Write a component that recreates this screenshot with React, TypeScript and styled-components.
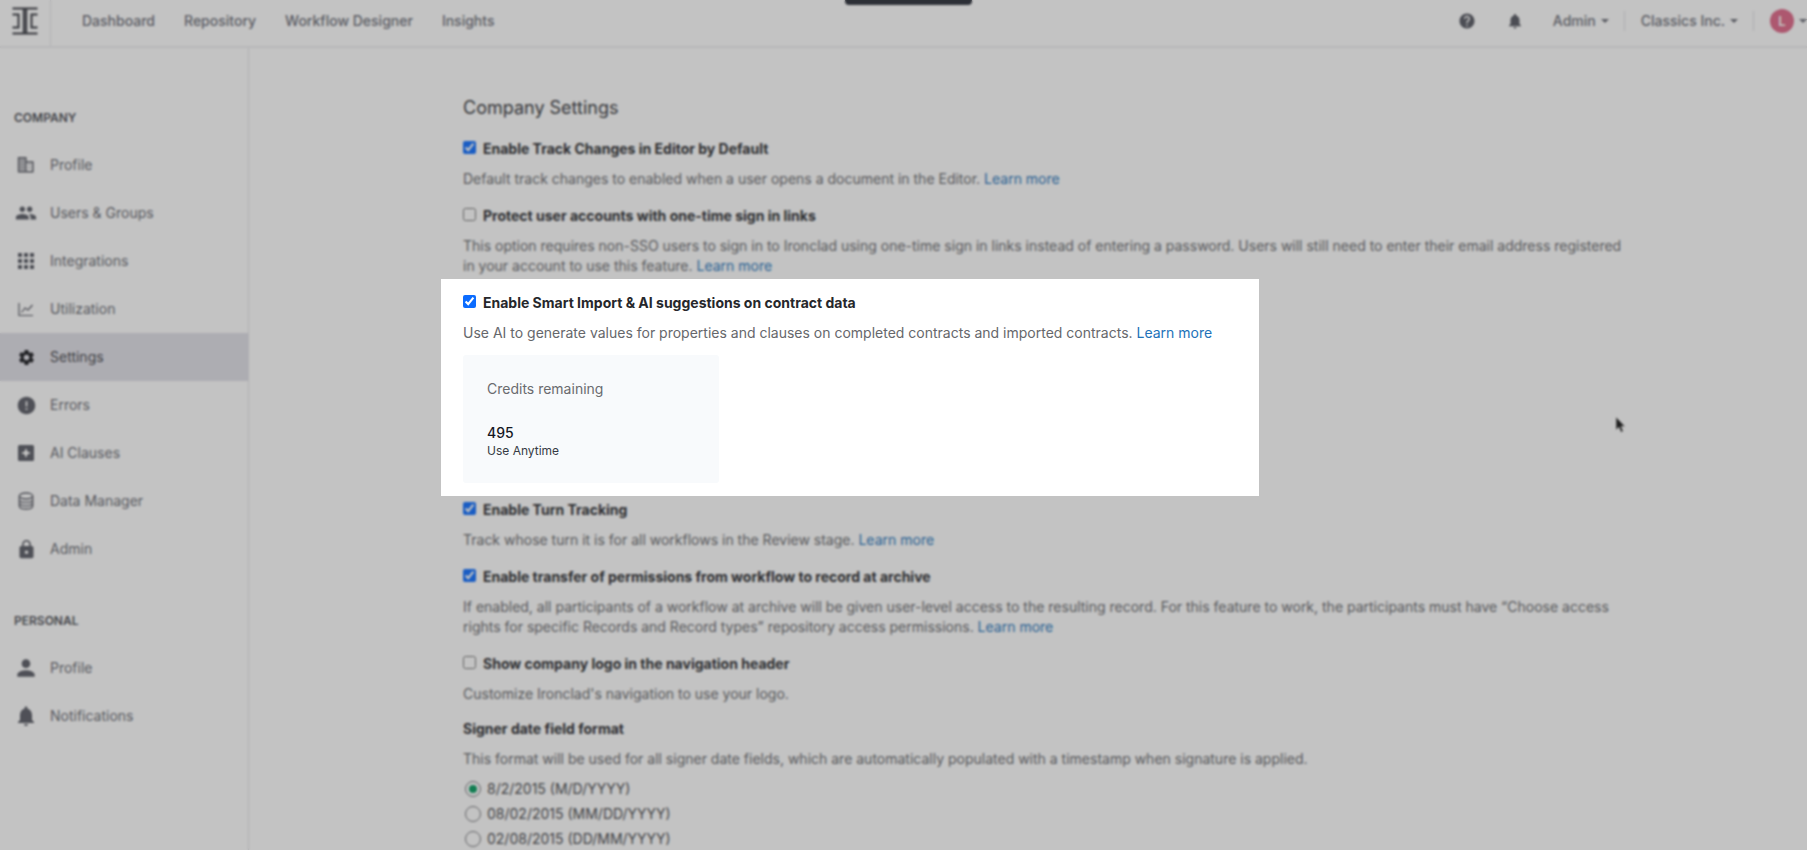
import React, { useState } from "react";
import styled, { createGlobalStyle } from "styled-components";
import {
  MdPeople, MdApps, MdSettings, MdError, MdLock, MdPerson, MdNotifications, MdHelp,
} from "react-icons/md";

const GlobalStyle = createGlobalStyle`
  *, *::before, *::after { box-sizing: border-box; }
  html, body { margin: 0; overflow: hidden; }
  body {
    background: #fff;
    color: #3c3d42;
    font-family: Inter, "Liberation Sans", sans-serif;
    font-size: 14px;
    line-height: 20px;
  }
`;

const Page = styled.div`
  min-height: 100vh;
  display: flex;
  flex-direction: column;
`;

const Header = styled.header`
  display: flex;
  align-items: stretch;
  height: 48px;
  border-bottom: 2px solid #eeeef0;
  color: #6a6c76;
  font-weight: 500;
`;

const LogoLink = styled.a`
  display: flex;
  justify-content: center;
  width: 51px;
  padding-top: 6px;
  border-right: 1px solid #e6e6ea;
  color: #34363e;
`;

const MainNav = styled.nav`
  display: flex;
  align-items: center;
  gap: 29px;
  padding: 0 31px 4px;
  a { color: inherit; text-decoration: none; }
`;

const Tools = styled.div`
  display: flex;
  align-items: center;
  margin-left: auto;
  padding-bottom: 4px;
`;

const ToolButton = styled.button`
  display: flex;
  align-items: center;
  gap: 5px;
  padding: 0;
  border: 0;
  background: none;
  color: #6a6c76;
  font: inherit;
`;

const IconTools = styled.div`
  display: flex;
  gap: 30px;
  margin-right: 29px;
  button { color: #53555f; }
`;

const Divider = styled.span`
  width: 1px;
  height: 20px;
  margin: 0 16px 0 15px;
  background: #e0e0e4;
`;

const Caret = styled.span`
  border: 4px solid transparent;
  border-top-color: currentColor;
  border-bottom-width: 0;
`;

const Avatar = styled.span`
  display: grid;
  place-items: center;
  width: 24px;
  height: 24px;
  border-radius: 50%;
  background: #df6486;
  color: #fff;
  font-size: 13px;
  font-weight: 600;
`;

const Body = styled.div`
  display: flex;
  flex: 1;
`;

const Sidebar = styled.aside`
  flex: none;
  width: 249px;
  padding-top: 60px;
  border-right: 1px solid #e3e3e8;
`;

const NavGroup = styled.nav`
  margin-bottom: 38px;
`;

const NavTitle = styled.h2`
  margin: 0 0 13px;
  padding-left: 14px;
  color: #4a4b52;
  font-size: 12px;
  font-weight: 600;
  line-height: 20px;
`;

const NavItem = styled.a<{ $active?: boolean }>`
  display: flex;
  align-items: center;
  gap: 14px;
  height: 48px;
  padding-left: 16px;
  background: ${({ $active }) => ($active ? "#e0dfe7" : "none")};
  color: ${({ $active }) => ($active ? "#3e3f46" : "#66686f")};
  text-decoration: none;
`;

const IconSlot = styled.span<{ $active?: boolean }>`
  display: flex;
  align-items: center;
  justify-content: center;
  flex: none;
  width: 20px;
  color: ${({ $active }) => ($active ? "#17181d" : "#575963")};
  svg { flex: none; }
`;

const Main = styled.main`
  flex: 1;
  min-width: 0;
  padding: 48px 180px 0 214px;
  @media (max-width: 1400px) {
    padding: 48px 48px 0;
  }
`;

const Content = styled.form`
  display: flex;
  flex-direction: column;
  gap: 17px;
`;

const PageTitle = styled.h1`
  margin: 0 0 2px;
  color: #333438;
  font-size: 18px;
  font-weight: 400;
  line-height: 24px;
`;

const SettingBlock = styled.section``;

const Spotlight = styled.section`
  position: relative;
  z-index: 2;
  width: 818px;
  max-width: calc(100% + 44px);
  margin: -14px -22px -13px;
  padding: 14px 22px 13px;
  background: #fff;
`;

const SettingLabel = styled.label`
  display: flex;
  align-items: flex-start;
  gap: 7px;
  color: #26272b;
  font-weight: 700;
`;

const Checkbox = styled.input`
  width: 13px;
  height: 13px;
  margin: 2px 0 0;
  accent-color: #0b6cff;
`;

const Description = styled.p`
  margin: 10px 0 0;
  color: #66676b;
`;

const LearnMore = styled.a`
  color: #2272b9;
  text-decoration: none;
`;

const CreditsCard = styled.div`
  width: 256px;
  height: 128px;
  margin-top: 12px;
  padding: 24px;
  border-radius: 3px;
  background: #f8fafc;
  color: #6a6b6f;
`;

const CreditCount = styled.div`
  margin-top: 24px;
  color: #15171f;
  font-weight: 500;
`;

const CreditKind = styled.div`
  color: #363a44;
  font-size: 12px;
  line-height: 16px;
`;

const DateFormats = styled.fieldset`
  margin: -2px 0 0;
  padding: 0;
  border: 0;
`;

const Legend = styled.legend`
  padding: 0;
  color: #26272b;
  font-weight: 700;
`;

const RadioList = styled.div`
  display: flex;
  flex-direction: column;
  gap: 5px;
  margin-top: 10px;
`;

const RadioLabel = styled.label`
  display: flex;
  align-items: center;
  gap: 6px;
  color: #46474b;
`;

const Radio = styled.input`
  appearance: none;
  display: grid;
  place-items: center;
  width: 16px;
  height: 16px;
  margin: 0 0 0 2px;
  border: 1px solid #77787c;
  border-radius: 50%;
  &:checked::before {
    content: "";
    width: 8px;
    height: 8px;
    border-radius: 50%;
    background: #009a5c;
  }
`;

const Toast = styled.div`
  position: fixed;
  top: 0;
  left: 50%;
  width: 127px;
  height: 5px;
  margin-left: -59px;
  border-radius: 0 0 4px 4px;
  background: #262a35;
`;

const Pointer = styled.svg`
  position: fixed;
  top: 416px;
  left: 1615px;
`;

const Scrim = styled.div`
  position: fixed;
  inset: 0;
  z-index: 1;
  background: rgba(60, 60, 60, 0.308);
  backdrop-filter: blur(1px);
  pointer-events: none;
`;

const Logo = () => (
  <svg width="26" height="30" viewBox="0 0 26 30" fill="none" stroke="currentColor" strokeWidth="2">
    <path d="M.5 2.500h25M.5 27.500h25M11.800 3v24M14.200 3v24" />
    <path d="M.5 8.500h6v13h-6M25.500 8.500h-6v13h6" />
  </svg>
);

const BuildingIcon = () => (
  <svg width="20" height="20" viewBox="0 0 20 20" fill="none" stroke="currentColor">
    <path d="M2.6 2.7h7.2v14H2.6zM9.8 6.9h7v9.8h-7z" strokeWidth="1.5" />
    <path d="M5 3v13M7.4 3v13M3 5.5h6.500M3 8.300h6.500M3 11.100h6.500M3 13.900h6.500M12 9.600h3M12 13h3" opacity=".65" />
  </svg>
);

const ChartIcon = () => (
  <svg width="20" height="20" viewBox="0 0 20 20" fill="none" stroke="currentColor" strokeWidth="1.200">
    <path d="M3 4v12.500h14M5.500 13.500l3.500-4.500 3 2 4.500-5" />
  </svg>
);

const SparkBoxIcon = () => (
  <svg width="20" height="20" viewBox="0 0 20 20" fill="currentColor" fillRule="evenodd">
    <path d="M3.500 2h13A1.500 1.500 0 0 1 18 3.500v13a1.500 1.500 0 0 1-1.500 1.500h-13A1.500 1.500 0 0 1 2 16.500v-13A1.500 1.500 0 0 1 3.500 2zM10 5l-1.400 3.600L5 10l3.600 1.400L10 15l1.400-3.600L15 10l-3.600-1.400z" />
  </svg>
);

const DatabaseIcon = () => (
  <svg width="20" height="20" viewBox="0 0 20 20" fill="none" stroke="currentColor" strokeWidth="1.300">
    <ellipse cx="10" cy="5" rx="6.700" ry="3" />
    <path d="M3.300 5v10c0 1.700 3 3 6.700 3s6.700-1.300 6.700-3V5M3.300 8.400c0 1.700 3 3 6.700 3s6.700-1.300 6.700-3M3.300 11.700c0 1.700 3 3 6.700 3s6.700-1.300 6.700-3" />
  </svg>
);

const companyLinks = [
  { label: "Profile", icon: <BuildingIcon /> },
  { label: "Users & Groups", icon: <MdPeople size={22} /> },
  { label: "Integrations", icon: <MdApps size={24} /> },
  { label: "Utilization", icon: <ChartIcon /> },
  { label: "Settings", icon: <MdSettings size={19} />, active: true },
  { label: "Errors", icon: <MdError size={21} /> },
  { label: "AI Clauses", icon: <SparkBoxIcon /> },
  { label: "Data Manager", icon: <DatabaseIcon /> },
  { label: "Admin", icon: <MdLock size={21} /> },
];

const personalLinks = [
  { label: "Profile", icon: <MdPerson size={26} /> },
  { label: "Notifications", icon: <MdNotifications size={24} /> },
];

const dateFormats = ["8/2/2015 (M/D/YYYY)", "08/02/2015 (MM/DD/YYYY)", "02/08/2015 (DD/MM/YYYY)"];

type SettingProps = {
  title: string;
  text: string;
  checked?: boolean;
  link?: boolean;
};

function Setting({ title, text, checked = false, link = true }: SettingProps) {
  const [on, setOn] = useState(checked);
  return (
    <>
      <SettingLabel>
        <Checkbox type="checkbox" checked={on} onChange={() => setOn(!on)} />
        {title}
      </SettingLabel>
      <Description>
        {text} {link && <LearnMore href="#">Learn more</LearnMore>}
      </Description>
    </>
  );
}

export default function App() {
  const [format, setFormat] = useState(dateFormats[0]);
  return (
    <Page>
      <GlobalStyle />
      <Header>
        <LogoLink href="#" aria-label="Home"><Logo /></LogoLink>
        <MainNav>
          <a href="#">Dashboard</a>
          <a href="#">Repository</a>
          <a href="#">Workflow Designer</a>
          <a href="#">Insights</a>
        </MainNav>
        <Tools>
          <IconTools>
            <ToolButton aria-label="Help"><MdHelp size={18} /></ToolButton>
            <ToolButton aria-label="Notifications"><MdNotifications size={18} /></ToolButton>
          </IconTools>
          <ToolButton>Admin <Caret /></ToolButton>
          <Divider />
          <ToolButton>Classics Inc. <Caret /></ToolButton>
          <Divider />
          <ToolButton aria-label="Account"><Avatar>L</Avatar><Caret /></ToolButton>
        </Tools>
      </Header>
      <Body>
        <Sidebar>
          <NavGroup>
            <NavTitle>COMPANY</NavTitle>
            {companyLinks.map(({ label, icon, active }) => (
              <NavItem href="#" key={label} $active={active}>
                <IconSlot $active={active}>{icon}</IconSlot>
                {label}
              </NavItem>
            ))}
          </NavGroup>
          <NavGroup>
            <NavTitle>PERSONAL</NavTitle>
            {personalLinks.map(({ label, icon }) => (
              <NavItem href="#" key={label}>
                <IconSlot>{icon}</IconSlot>
                {label}
              </NavItem>
            ))}
          </NavGroup>
        </Sidebar>
        <Main>
          <Content>
            <PageTitle>Company Settings</PageTitle>
            <SettingBlock>
              <Setting checked title="Enable Track Changes in Editor by Default"
                text="Default track changes to enabled when a user opens a document in the Editor." />
            </SettingBlock>
            <SettingBlock>
              <Setting title="Protect user accounts with one-time sign in links"
                text="This option requires non-SSO users to sign in to Ironclad using one-time sign in links instead of entering a password. Users will still need to enter their email address registered in your account to use this feature." />
            </SettingBlock>
            <Spotlight>
              <Setting checked title="Enable Smart Import & AI suggestions on contract data"
                text="Use AI to generate values for properties and clauses on completed contracts and imported contracts." />
              <CreditsCard>
                Credits remaining
                <CreditCount>495</CreditCount>
                <CreditKind>Use Anytime</CreditKind>
              </CreditsCard>
            </Spotlight>
            <SettingBlock>
              <Setting checked title="Enable Turn Tracking"
                text="Track whose turn it is for all workflows in the Review stage." />
            </SettingBlock>
            <SettingBlock>
              <Setting checked title="Enable transfer of permissions from workflow to record at archive"
                text="If enabled, all participants of a workflow at archive will be given user-level access to the resulting record. For this feature to work, the participants must have “Choose access rights for specific Records and Record types” repository access permissions." />
            </SettingBlock>
            <SettingBlock>
              <Setting link={false} title="Show company logo in the navigation header"
                text="Customize Ironclad's navigation to use your logo." />
            </SettingBlock>
            <DateFormats>
              <Legend>Signer date field format</Legend>
              <Description>
                This format will be used for all signer date fields, which are automatically populated with a timestamp when signature is applied.
              </Description>
              <RadioList>
                {dateFormats.map((value) => (
                  <RadioLabel key={value}>
                    <Radio type="radio" name="date-format" value={value}
                      checked={format === value} onChange={() => setFormat(value)} />
                    {value}
                  </RadioLabel>
                ))}
              </RadioList>
            </DateFormats>
          </Content>
        </Main>
      </Body>
      <Toast />
      <Pointer width="12" height="18" viewBox="0 0 12 18">
        <path d="M1 1v13l3-2.800 2 5 2.200-.9-2-4.800H10z" fill="#111" stroke="#eee" strokeWidth=".6" />
      </Pointer>
      <Scrim />
    </Page>
  );
}
